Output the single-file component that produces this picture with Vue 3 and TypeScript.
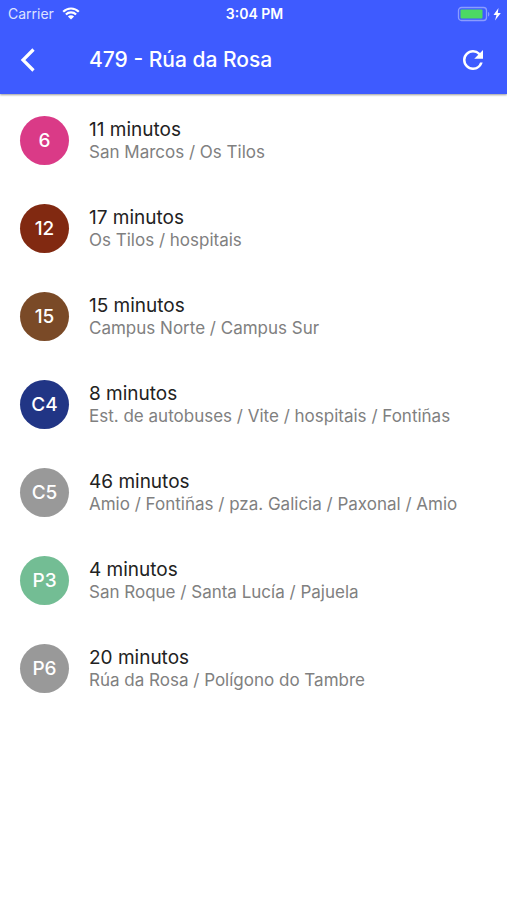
<script setup lang="ts">
interface Arrival {
  line: string
  color: string
  minutes: number
  route: string
}

const arrivals: Arrival[] = [
  { line: '6', color: '#da3a87', minutes: 11, route: 'San Marcos / Os Tilos' },
  { line: '12', color: '#812911', minutes: 17, route: 'Os Tilos / hospitais' },
  { line: '15', color: '#7a4a27', minutes: 15, route: 'Campus Norte / Campus Sur' },
  { line: 'C4', color: '#213585', minutes: 8, route: 'Est. de autobuses / Vite / hospitais / Fontiñas' },
  { line: 'C5', color: '#999999', minutes: 46, route: 'Amio / Fontiñas / pza. Galicia / Paxonal / Amio' },
  { line: 'P3', color: '#73bd94', minutes: 4, route: 'San Roque / Santa Lucía / Pajuela' },
  { line: 'P6', color: '#999999', minutes: 20, route: 'Rúa da Rosa / Polígono do Tambre' },
]
</script>

<template>
  <div class="screen">
    <header class="header">
      <div class="status">
        <div class="carrier">
          <span>Carrier</span>
          <svg class="wifi" viewBox="0 0 18 13" aria-hidden="true">
            <path d="M1.2 4.7a11.1 11.1 0 0 1 15.6 0M3.9 7.5a7.3 7.3 0 0 1 10.2 0" />
            <path class="solid" d="M9 12.6 5.9 9.5a4.4 4.4 0 0 1 6.2 0z" />
          </svg>
        </div>
        <span class="clock">3:04 PM</span>
        <div class="power">
          <svg class="battery" viewBox="0 0 44 16" aria-hidden="true">
            <rect class="shell" x="1.5" y="1.5" width="28" height="13" rx="3" />
            <path class="cap" d="M31 6v4.500c1.800-.6 1.800-3.900 0-4.500z" />
            <rect class="charge" x="3.500" y="3.500" width="22" height="9" rx="1" />
            <path class="bolt" d="M41.500 2 36.500 9h3l-1.500 5.500L43.800 7h-3z" />
          </svg>
        </div>
      </div>
      <div class="toolbar">
        <button class="icon-button" type="button" aria-label="Volver">
          <svg class="icon" viewBox="0 0 28 28" aria-hidden="true">
            <path class="chevron" d="M19.500 3.500 9 14l10.500 10.500" />
          </svg>
        </button>
        <h1 class="title">479 - Rúa da Rosa</h1>
        <button class="icon-button" type="button" aria-label="Actualizar">
          <svg class="icon" viewBox="0 0 28 28" aria-hidden="true">
            <path class="refresh" d="M21.070 6.930A9.960 9.960 0 0 0 14 4C8.480 4 4 8.480 4 14s4.480 10 10 10c4.660 0 8.550-3.190 9.660-7.500h-2.600A7.490 7.490 0 0 1 14 21.500a7.500 7.500 0 1 1 0-15c2.080 0 3.930.860 5.290 2.210L15.250 12.750H24V4z" />
          </svg>
        </button>
      </div>
    </header>

    <main>
      <ul class="arrivals">
        <li v-for="arrival in arrivals" :key="arrival.line" class="arrival">
          <span class="badge" :style="{ backgroundColor: arrival.color }">{{ arrival.line }}</span>
          <div class="details">
            <p class="time">{{ arrival.minutes }} minutos</p>
            <p class="route">{{ arrival.route }}</p>
          </div>
        </li>
      </ul>
    </main>
  </div>
</template>

<style>
body {
  margin: 0;
  background: #fff;
}
</style>

<style scoped>
.screen {
  font-family: Inter, "Liberation Sans", sans-serif;
  min-height: 100vh;
  background: #fff;
}

.header {
  background: #3e5bff;
  color: #fff;
  box-shadow: 0 1px 2px rgba(0, 0, 0, 0.4);
}

.status {
  display: grid;
  grid-template-columns: 1fr auto 1fr;
  align-items: center;
  height: 27px;
  padding: 0 6px 0 8px;
  font-size: 14px;
}

.carrier {
  display: flex;
  align-items: center;
  gap: 8px;
  color: #dde2ff;
}

.wifi {
  width: 18px;
  height: 13px;
  fill: none;
  stroke: #fff;
  stroke-width: 2.2;
}

.wifi .solid {
  fill: #fff;
  stroke: none;
}

.clock {
  font-weight: 600;
}

.power {
  display: flex;
  justify-content: flex-end;
}

.battery {
  width: 44px;
  height: 16px;
}

.shell {
  fill: none;
  stroke: #8b9cff;
  stroke-width: 1.3;
}

.cap {
  fill: #8b9cff;
}

.charge {
  fill: #4cd964;
}

.bolt {
  fill: #fff;
}

.toolbar {
  display: flex;
  align-items: center;
  box-sizing: border-box;
  height: 67px;
  padding: 0 10px 2px 4px;
}

.icon-button {
  display: grid;
  place-items: center;
  width: 48px;
  height: 48px;
  padding: 0;
  border: 0;
  background: none;
  color: inherit;
}

.icon {
  width: 28px;
  height: 28px;
}

.chevron {
  fill: none;
  stroke: currentColor;
  stroke-width: 3.2;
}

.refresh {
  fill: currentColor;
}

.title {
  flex: 1;
  margin: 0;
  padding-left: 37px;
  font-size: 21px;
  line-height: 28px;
  font-weight: 500;
}

.arrivals {
  margin: 0;
  padding: 2px 0;
  list-style: none;
}

.arrival {
  display: flex;
  align-items: center;
  gap: 20px;
  height: 88px;
  padding: 0 20px;
}

.badge {
  display: grid;
  place-items: center;
  flex: none;
  width: 49px;
  height: 49px;
  border-radius: 50%;
  color: #fff;
  font-size: 19px;
  font-weight: 500;
}

.details {
  padding-top: 2px;
}

.time,
.route {
  margin: 0;
  line-height: 22px;
}

.time {
  color: #222;
  font-size: 19px;
}

.route {
  color: #808080;
  font-size: 17px;
}
</style>
